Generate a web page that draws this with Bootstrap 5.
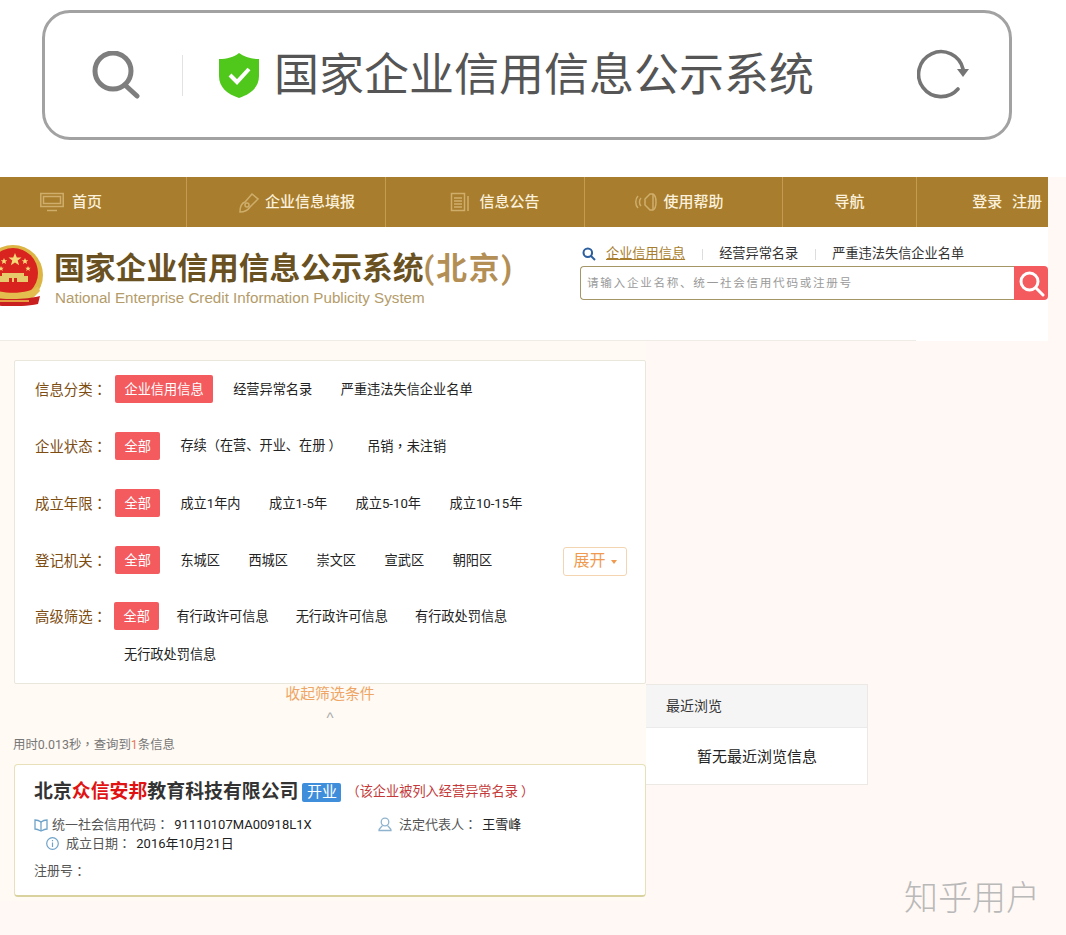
<!DOCTYPE html>
<html lang="zh-CN">
<head>
  <meta charset="UTF-8">
  <meta name="viewport" content="width=device-width, initial-scale=1.0">
  <title>国家企业信用信息公示系统</title>
  <link href="https://cdn.jsdelivr.net/npm/bootstrap@5.3.1/dist/css/bootstrap.min.css" rel="stylesheet">
  <style>
    body { background: #fff8f4; font-family: Roboto, "Noto Sans CJK SC", sans-serif; font-size: 13.2px; color: #333; width: 1066px; height: 935px; overflow: hidden; position: relative; text-spacing-trim: space-all; }
    svg { flex: none; }
    /* 标点居中 */
    .mid { font-family: "Noto Sans CJK TC", sans-serif; }
    .paren-r { margin: 0 -3px 0 3px; }

    /* 顶部地址栏 */
    .top-zone { background: #fff; height: 177px; padding: 10px 0 0 42px; }
    .addr-bar { width: 970px; height: 130px; border: 3px solid #a2a2a2; border-radius: 28px; padding-left: 47px; }
    .addr-sep { width: 1px; height: 41px; background: #e2e2e2; margin: 0 36px 0 42px; flex: none; }
    .addr-text { font-size: 45px; font-weight: 400; color: #555; line-height: 1; margin-left: 15px; white-space: nowrap; }
    .addr-reload { margin-left: 103px; }

    /* 导航 */
    .gs-nav { width: 1048px; height: 50px; background: #a87d2d; color: #fbf1dc; font-size: 15px; font-weight: 500; }
    .gs-nav-item { height: 100%; border-right: 1px solid #c49b50; gap: 6px; }
    .w-home { width: 187px; padding-right: 44px; gap: 8px; }
    .w-fill { width: 199px; padding-left: 22px; }
    .w-news { width: 199px; padding-left: 20px; gap: 9px; }
    .w-help { width: 198px; padding-right: 8px; gap: 4px; }
    .w-guide { width: 134px; }
    .w-login { width: 131px; border-right: 0; justify-content: flex-end !important; padding-right: 6px; word-spacing: 6px; }

    /* 标题区 */
    .gs-head { width: 1048px; height: 114px; background: #fff; border-bottom: 1px solid; border-image: linear-gradient(to right, #efece6 915px, transparent 915px) 1; }
    .emblem { margin: 17px 0 0 -16px; }
    .brand { margin: 19px 0 0 10px; width: 526px; }
    .brand-cn { font-size: 30.8px; font-weight: 700; color: #6a5122; line-height: 46px; white-space: nowrap; }
    .brand-cn span { color: #b38f55; letter-spacing: 1.8px; }
    .brand-en { font-family: "Liberation Sans", sans-serif; font-size: 15.2px; color: #b49c6a; line-height: 16px; margin: -2px 0 0 1px; white-space: nowrap; }
    .search-side { width: 468px; padding-top: 17px; }
    .search-tabs { height: 20px; margin-left: 2px; white-space: nowrap; }
    .tab-on { color: #a87d2d; text-decoration: underline; margin-left: 10px; }
    .tab-sep { width: 1px; height: 11px; background: #ddd; margin: 0 16.5px; }
    .search-box { height: 34px; margin-top: 2px; }
    .search-box .form-control { border: 1px solid #a59668; border-right: 0; border-radius: 4px 0 0 4px; font-size: 11.6px; padding: 0 6px; letter-spacing: 1.7px; height: 34px; }
    .search-box .form-control::placeholder { color: #9a9a9a; }
    .search-btn { width: 34px; padding: 0; background: #f45b5f; border: 0; border-radius: 0 4px 4px 0; }

    /* 筛选 */
    .left-col { width: 646px; height: 560px; padding: 19px 0 0 14px; flex: none; background: #fffaf3; }
    .right-col { width: 222px; padding-top: 343px; flex: none; }
    .filter-box { height: 324px; background: #fff; border: 1px solid #e9e7dc; border-radius: 2px; }
    .filter-row { height: 57px; padding-left: 20px; color: #222; }
    .filter-row.tight { padding-bottom: 2px; }
    .filter-row.extra { height: 38px; padding-left: 109px; margin-top: -10px; }
    .filter-label { width: 80px; font-size: 14.4px; color: #7d4d12; flex: none; white-space: nowrap; }
    .filter-on { background: #f45b5f; color: #fff; font-size: 13.2px; line-height: 18px; padding: 6px 9.5px 4px; margin-bottom: 2px; border: 0; border-radius: 2px; flex: none; }
    .filter-opts { margin-left: 20px; gap: 28.5px; white-space: nowrap; }
    .filter-row.tight .filter-label { width: 79px; }
    .filter-row.tight .filter-opts { margin-left: 17px; gap: 27px; }
    .more-btn { margin: 1px 18px 0 auto; width: 64px; height: 29px; font-size: 16px; line-height: 1; padding: 0; color: #f09a50; background: #fff; border: 1px solid #f3d5b2; border-radius: 3px; }
    .more-btn::after { content: ""; display: inline-block; margin-left: 5px; vertical-align: 2px; border-top: 4px solid #f09a50; border-left: 3px solid transparent; border-right: 3px solid transparent; }
    .collapse-tip { height: 46px; color: #eea565; font-size: 14.9px; line-height: 21px; }
    .collapse-tip small { display: block; font-size: 15px; color: #aaa; line-height: 25px; font-family: "Liberation Sans", sans-serif; }
    .took { height: 34px; margin-left: -1px; color: #777; font-size: 12.4px; padding-top: 5px; }
    .took b { color: #e7795c; font-weight: 400; }

    /* 结果 */
    .result-box { height: 133px; background: #fff; border: 1px solid #e7e0b8; border-bottom: 2px solid #d9d29e; border-radius: 4px; padding: 14px 18px 0 19px; }
    .result-title { font-size: 18.9px; font-weight: 700; color: #333; line-height: 26px; white-space: nowrap; }
    .result-title em { font-style: normal; color: #e01212; }
    .open-tag { background: #3f8edb; color: #fff; font-size: 15px; font-weight: 400; line-height: 19px; width: 39px; text-align: center; border-radius: 2px; margin-left: 4px; }
    .warn-note { color: #c43a3a; font-size: 13.2px; margin-left: 5px; font-weight: 400; }
    .info-line { height: 19px; color: #555; font-size: 13px; white-space: nowrap; }
    .info-line b { color: #222; font-weight: 400; margin-left: 2px; }
    .info-first { margin-top: 10px; }
    .info-last { margin-top: 8px; }
    .info-a { width: 344px; gap: 4px; }
    .info-b { gap: 7px; }
    .info-date { padding-left: 12px; gap: 7px; }

    /* 最近浏览 */
    .recent-box { height: 101px; background: #fff; border: 1px solid #ece9e4; border-left: 0; border-radius: 0; }
    .recent-box .card-header { height: 43px; background: #f5f5f5; border-bottom: 1px solid #ebebeb; border-radius: 0; padding: 0 0 0 20px; font-size: 14px; color: #333; line-height: 42px; }
    .recent-box .card-body { padding: 20px 0 0 51px; font-size: 15px; color: #222; line-height: 18px; }

    .watermark { position: absolute; left: 904px; top: 876px; font-size: 34px; font-weight: 300; color: #b9b9b9; line-height: 44px; }
  </style>
</head>
<body>

  <!-- 地址栏 -->
  <div class="top-zone">
    <div class="addr-bar d-flex align-items-center">
      <svg width="48" height="48" viewBox="0 0 48 48" fill="none" stroke="#7e7e7e" stroke-width="5" stroke-linecap="round"><circle cx="21" cy="20" r="18"/><path d="M33 34l12 11"/></svg>
      <div class="addr-sep"></div>
      <svg width="40" height="45" viewBox="0 0 40 45"><path d="M20 0c5 4 12 6 20 6v17c0 11-8 18-20 22C8 41 0 34 0 23V6c8 0 15-2 20-6z" fill="#4fc81b"/><path d="M11 22l7 7 12-13" fill="none" stroke="#fff" stroke-width="4"/></svg>
      <div class="addr-text">国家企业信用信息公示系统</div>
      <svg class="addr-reload" width="54" height="52" viewBox="0 0 54 52" fill="none"><path d="M46 20A22.500 22.500 0 1 0 41 40" stroke="#757575" stroke-width="3.6" stroke-linecap="round"/><path d="M40 20h12l-6 8z" fill="#757575"/></svg>
    </div>
  </div>

  <!-- 导航 -->
  <nav class="gs-nav d-flex">
    <div class="gs-nav-item w-home d-flex align-items-center justify-content-center">
      <svg width="24" height="20" viewBox="0 0 24 20" fill="none" stroke="#cfae6c" stroke-width="1.5"><rect x=".8" y="1.5" width="22.400" height="13"/><rect x="3.500" y="4.500" width="17" height="7"/><path d="M7 18.500h10"/></svg>
      <span>首页</span>
    </div>
    <div class="gs-nav-item w-fill d-flex align-items-center justify-content-center">
      <svg width="20" height="21" viewBox="0 0 20 21" fill="none" stroke="#cfae6c" stroke-width="1.5"><path d="M1 20c0-6 2-9 5-10l7-8 6 5-8 8c-2 3-6 5-10 5z"/><circle cx="8" cy="13" r="2"/></svg>
      <span>企业信息填报</span>
    </div>
    <div class="gs-nav-item w-news d-flex align-items-center justify-content-center">
      <svg width="20" height="21" viewBox="0 0 20 21" fill="none" stroke="#cfae6c" stroke-width="1.5"><rect x="1.500" y="1.500" width="13" height="17"/><path d="M18 4v15M4 6h8M4 9h8M4 12h8M4 15h8"/></svg>
      <span>信息公告</span>
    </div>
    <div class="gs-nav-item w-help d-flex align-items-center justify-content-center">
      <svg width="24" height="18" viewBox="0 0 24 18" fill="none" stroke="#cfae6c" stroke-width="1.5"><path d="M6 5c-2 2-2 6 0 8M3 3c-3 3-3 9 0 12"/><path d="M10 6l5-5h3c4 2 4 14 0 16h-3l-5-5z"/><path d="M18 1v16"/></svg>
      <span>使用帮助</span>
    </div>
    <div class="gs-nav-item w-guide d-flex align-items-center justify-content-center">导航</div>
    <div class="gs-nav-item w-login d-flex align-items-center">登录 注册</div>
  </nav>

  <!-- 标题区 -->
  <header class="gs-head d-flex">
    <svg class="emblem" width="60" height="62" viewBox="0 0 60 62">
      <circle cx="29" cy="31" r="30" fill="#dcb545"/>
      <circle cx="29" cy="29" r="25" fill="#d9231f"/>
      <path d="M31 9l1.800 4.500h4.700l-3.800 3 1.400 4.700-4.100-2.800-4.100 2.800 1.400-4.700-3.800-3h4.700z" fill="#f5d878"/>
      <path d="M20 14l1 2.200h2.300l-1.900 1.500.7 2.400-2.100-1.400-2.100 1.400.7-2.400-1.900-1.500H19zM41 14l1 2.200h2.300l-1.900 1.500.7 2.400-2.100-1.400-2.100 1.400.7-2.400-1.900-1.500H40zM17 22l.8 1.800h1.900l-1.500 1.200.6 2-1.800-1.200-1.800 1.200.6-2-1.500-1.200h1.900zM44 22l.8 1.800h1.900l-1.500 1.200.6 2-1.800-1.200-1.800 1.200.6-2-1.500-1.200h1.900z" fill="#f5d878"/>
      <path d="M18 29h22v3H18zM14 32h30v6H14z" fill="#e6c96a"/>
      <path d="M25 34h3v4h-3zM30 34h3v4h-3z" fill="#d9231f"/>
      <path d="M4 42c8 9 42 9 50 0l2 5-6 6c-12 5-30 4-42 0l-5-6z" fill="#e3bd4e"/>
      <path d="M2 52c8 2 16 3 27 3s19-1 27-3l-2 8c-15 3-35 3-50 0z" fill="#c9201f"/>
      <path d="M13 57h32" stroke="#f0c94e" stroke-width="1.500"/>
    </svg>
    <div class="brand">
      <div class="brand-cn">国家企业信用信息公示系统<span>(北京)</span></div>
      <div class="brand-en">National Enterprise Credit Information Publicity System</div>
    </div>
    <div class="search-side">
      <div class="search-tabs d-flex align-items-center">
        <svg width="14" height="14" viewBox="0 0 14 14" fill="none"><circle cx="5.800" cy="5.800" r="4.300" stroke="#2d5f9e" stroke-width="2"/><path d="M9 9l4 4" stroke="#2d5f9e" stroke-width="2"/></svg>
        <span class="tab-on">企业信用信息</span>
        <span class="tab-sep"></span>
        <span>经营异常名录</span>
        <span class="tab-sep"></span>
        <span>严重违法失信企业名单</span>
      </div>
      <div class="search-box input-group">
        <input type="text" class="form-control" placeholder="请输入企业名称、统一社会信用代码或注册号">
        <button class="search-btn btn d-flex align-items-center justify-content-center" type="button">
          <svg width="27" height="27" viewBox="0 0 27 27" fill="none" stroke="#fff" stroke-width="3"><circle cx="11.500" cy="11.500" r="8.500"/><path d="M18 18l7 7" stroke-linecap="round"/></svg>
        </button>
      </div>
    </div>
  </header>

  <div class="d-flex">
    <div class="left-col">
      <!-- 筛选条件 -->
      <div class="filter-box">
        <div class="filter-row d-flex align-items-center">
          <span class="filter-label">信息分类<span class="mid" lang="zh-TW">：</span></span>
          <button class="filter-on" type="button">企业信用信息</button>
          <div class="filter-opts d-flex"><span>经营异常名录</span><span>严重违法失信企业名单</span></div>
        </div>
        <div class="filter-row d-flex align-items-center">
          <span class="filter-label">企业状态<span class="mid" lang="zh-TW">：</span></span>
          <button class="filter-on" type="button">全部</button>
          <div class="filter-opts d-flex"><span>存续（在营、开业、在册<span class="paren-r">）</span></span><span>吊销<span class="mid" lang="zh-TW">，</span>未注销</span></div>
        </div>
        <div class="filter-row d-flex align-items-center">
          <span class="filter-label">成立年限<span class="mid" lang="zh-TW">：</span></span>
          <button class="filter-on" type="button">全部</button>
          <div class="filter-opts d-flex"><span>成立1年内</span><span>成立1-5年</span><span>成立5-10年</span><span>成立10-15年</span></div>
        </div>
        <div class="filter-row d-flex align-items-center">
          <span class="filter-label">登记机关<span class="mid" lang="zh-TW">：</span></span>
          <button class="filter-on" type="button">全部</button>
          <div class="filter-opts d-flex"><span>东城区</span><span>西城区</span><span>崇文区</span><span>宣武区</span><span>朝阳区</span></div>
          <button class="more-btn btn" type="button">展开</button>
        </div>
        <div class="filter-row tight d-flex align-items-center">
          <span class="filter-label">高级筛选<span class="mid" lang="zh-TW">：</span></span>
          <button class="filter-on" type="button">全部</button>
          <div class="filter-opts d-flex"><span>有行政许可信息</span><span>无行政许可信息</span><span>有行政处罚信息</span></div>
        </div>
        <div class="filter-row extra d-flex align-items-center"><span>无行政处罚信息</span></div>
      </div>

      <div class="collapse-tip text-center">收起筛选条件<small>^</small></div>
      <div class="took">用时0.013秒<span class="mid" lang="zh-TW">，</span>查询到<b>1</b>条信息</div>

      <!-- 查询结果 -->
      <div class="result-box">
        <div class="result-title d-flex align-items-center">
          <span>北京<em>众信安邦</em>教育科技有限公司</span>
          <span class="open-tag">开业</span>
          <span class="warn-note">（该企业被列入经营异常名录<span class="paren-r">）</span></span>
        </div>
        <div class="info-line info-first d-flex align-items-center">
          <div class="info-a d-flex align-items-center">
            <svg width="14" height="14" viewBox="0 0 14 14" fill="none" stroke="#6ea3c7" stroke-width="1.300"><path d="M1 2c2 0 4 .5 6 2 2-1.500 4-2 6-2v9c-2 0-4 1-6 2-2-1-4-2-6-2z"/><path d="M7 4v9"/></svg>
            <span>统一社会信用代码<span class="mid" lang="zh-TW">：</span> <b>91110107MA00918L1X</b></span>
          </div>
          <div class="info-b d-flex align-items-center">
            <svg width="14" height="15" viewBox="0 0 14 15" fill="none" stroke="#8fb3cf" stroke-width="1.300"><circle cx="7" cy="5" r="3.800"/><path d="M4.500 8.500C3.500 10 1 11 1 13.500h12C13 11 10.500 10 9.500 8.500"/></svg>
            <span>法定代表人<span class="mid" lang="zh-TW">：</span> <b>王雪峰</b></span>
          </div>
        </div>
        <div class="info-line info-date d-flex align-items-center">
          <svg width="13" height="13" viewBox="0 0 13 13" fill="none" stroke="#6ea3c7" stroke-width="1.200"><circle cx="6.500" cy="6.500" r="5.800"/><path d="M6.500 5.500v4.500M6.500 3v1.300"/></svg>
          <span>成立日期<span class="mid" lang="zh-TW">：</span> <b>2016年10月21日</b></span>
        </div>
        <div class="info-line info-last d-flex align-items-center">注册号<span class="mid" lang="zh-TW">：</span></div>
      </div>
    </div>

    <div class="right-col">
      <div class="recent-box card">
        <div class="card-header">最近浏览</div>
        <div class="card-body">暂无最近浏览信息</div>
      </div>
    </div>
  </div>

  <div class="watermark">知乎用户</div>

  <script src="https://cdn.jsdelivr.net/npm/bootstrap@5.3.1/dist/js/bootstrap.bundle.min.js"></script>
</body>
</html>
